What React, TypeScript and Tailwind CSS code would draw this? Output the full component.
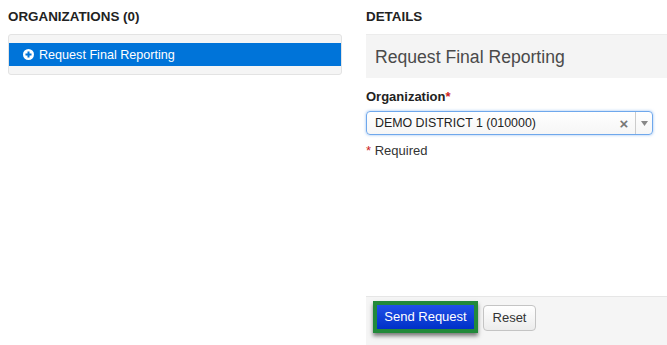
import React from 'react';

function PlusCircle() {
    return (
        <svg width="11" height="11" viewBox="0 0 12 12" className="shrink-0">
            <circle cx="6" cy="6" r="6" fill="#ffffff" />
            <rect x="2.7" y="4.9" width="6.6" height="2.2" fill="#0074d9" />
            <rect x="4.9" y="2.7" width="2.2" height="6.6" fill="#0074d9" />
        </svg>
    );
}

export default function App() {
    return (
        <div
            className="flex h-[345px] w-[667px] overflow-hidden bg-white text-[13px] text-[#333333]"
            style={{ fontFamily: '"Liberation Sans", Arial, sans-serif' }}
        >
            {/* Organizations */}
            <div className="ml-[8px] w-[334px] shrink-0 pt-[8px]">
                <h2 className="mb-[8px] text-[13.4px] font-bold leading-[18px] text-[#222222]">ORGANIZATIONS (0)</h2>
                <div className="rounded-[3px] border border-[#e3e3e3] bg-[#f5f5f5] py-[8px]">
                    <div className="flex h-[23px] items-center gap-[5px] bg-[#0074d9] pl-[14px] text-[12.6px] text-white">
                        <PlusCircle />
                        <span className="leading-[16px]">Request Final Reporting</span>
                    </div>
                </div>
            </div>

            {/* Details */}
            <div className="ml-[24px] flex min-w-0 flex-1 flex-col pt-[8px]">
                <h2 className="mb-[8px] text-[13.4px] font-bold leading-[18px] text-[#222222]">DETAILS</h2>
                <div className="flex h-[44px] items-center border-t border-[#ececec] bg-[#f4f4f4] pl-[9px]">
                    <span className="text-[17.6px] leading-[22px] text-[#4a4a4a]">Request Final Reporting</span>
                </div>

                <label className="mt-[10px] text-[13px] font-bold leading-[18px] text-[#222222]">
                    Organization<span className="text-[#cc2222]">*</span>
                </label>
                <div className="mt-[5px] flex h-[24px] w-[287px] items-stretch rounded-[4px] border border-[#6fa8ec] bg-gradient-to-b from-white to-[#f6f6f6] shadow-[0_0_3px_rgba(82,150,230,0.6)]">
                    <span className="flex flex-1 items-center pl-[8px] text-[12.4px] leading-[16px] text-[#222222]">DEMO DISTRICT 1 (010000)</span>
                    <span className="flex w-[22px] items-center justify-center text-[15px] font-bold leading-none text-[#777777]">×</span>
                    <span className="flex w-[17px] items-center justify-center border-l border-[#cccccc]">
                        <svg width="7" height="5" viewBox="0 0 7 5">
                            <path d="M0 0 L7 0 L3.5 5 Z" fill="#888888" />
                        </svg>
                    </span>
                </div>
                <p className="mt-[7px] leading-[18px]">
                    <span className="text-[#cc2222]">*</span> Required
                </p>

                <div className="mt-auto flex h-[49px] items-start gap-[5px] border-t border-[#e6e6e6] bg-[#f5f5f5] pl-[7px] pt-[4px]">
                    <button className="h-[32px] w-[105px] border-[4px] border-[#22893a] bg-gradient-to-b from-[#2050e8] to-[#0030c8] text-[13px] leading-[16px] text-white shadow-[0_3px_4px_rgba(0,0,0,0.5)]">
                        Send Request
                    </button>
                    <button className="mt-[4px] h-[26px] w-[53px] rounded-[4px] border border-[#c4c4c4] bg-gradient-to-b from-white to-[#ececec] text-[13px] leading-[16px] text-[#333333]">
                        Reset
                    </button>
                </div>
            </div>
        </div>
    );
}
